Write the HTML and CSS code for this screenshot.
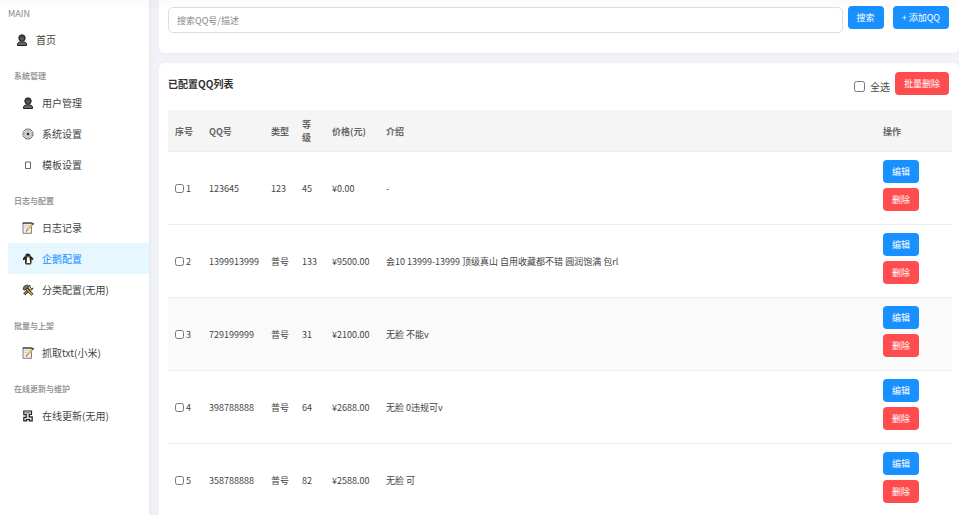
FILE: index.html
```
<!DOCTYPE html>
<html lang="zh-CN">
<head>
  <meta charset="UTF-8">
  <meta name="viewport" content="width=device-width, initial-scale=1.0">
  <title>企鹅配置</title>
  <link rel="stylesheet" href="styles.css">
</head>
<body>
  <!-- shared icons -->
  <svg class="sprite" aria-hidden="true">
    <symbol id="icon-user" viewBox="0 0 12 12">
      <path d="M1.500 11.500V9.500l1.500-1.300 1.500-.4h3l1.500.4 1.500 1.300v2z" fill="#666" stroke="#222"/>
      <circle cx="6" cy="4" r="3.200" fill="#444" stroke="#222"/>
      <path d="M4.500 4.500h3M5 6h2" stroke="#888" stroke-width=".6"/>
    </symbol>
    <symbol id="icon-note" viewBox="0 0 12 12">
      <path d="M1 1h8.500v10.300H1z" fill="#eee" stroke="#666" stroke-width=".8"/>
      <path d="M.6 1h9.300" stroke="#222"/>
      <path d="M2.500 3.500h5M2.500 5.500h3" stroke="#bbb" stroke-width=".6"/>
      <path d="M4.800 8.300l5.700-6" stroke="#e0b050" stroke-width="1.700"/>
      <path d="M10.300 2.500l1.200-1.300" stroke="#222" stroke-width="1.700"/>
      <path d="M4 9.300l1.200-1" stroke="#333"/>
    </symbol>
  </svg>

  <header class="topbar"></header>

  <div class="layout">
    <nav class="sidebar">
      <div class="sidebar-title">MAIN</div>
      <a class="nav-item" href="#"><svg class="icon"><use href="#icon-user"/></svg>首页</a>

      <div class="nav-group">
        <div class="group-title">系统管理</div>
        <a class="nav-item" href="#"><svg class="icon"><use href="#icon-user"/></svg>用户管理</a>
        <a class="nav-item" href="#">
          <svg class="icon" viewBox="0 0 12 12">
            <circle cx="6" cy="6" r="5" fill="none" stroke="#444" stroke-width="1" stroke-dasharray="2.400 .4"/>
            <circle cx="6" cy="6" r="3.800" fill="#ddd" stroke="#999" stroke-width=".6"/>
            <path d="M6 2.500v7M2.500 6h7M3.500 3.500l5 5M8.500 3.500l-5 5" stroke="#aaa" stroke-width=".5"/>
            <circle cx="6" cy="6" r="1.200" fill="#222"/>
          </svg>系统设置</a>
        <a class="nav-item" href="#">
          <svg class="icon" viewBox="0 0 12 12">
            <path d="M3.500 3h5v6.500h-5z" fill="none" stroke="#555" stroke-width=".9"/>
          </svg>模板设置</a>
      </div>

      <div class="nav-group">
        <div class="group-title">日志与配置</div>
        <a class="nav-item" href="#"><svg class="icon"><use href="#icon-note"/></svg>日志记录</a>
        <a class="nav-item active" href="#">
          <svg class="icon" viewBox="0 0 12 12">
            <path d="M5.500.5C4 .5 3.200 1.500 3.200 2.800L1 5.200v2l2-.7v3.700l1 1.200h4.500l1-1.200V6.500l1.700.7v-2L8.500 2.800C8.200 1.200 7.200.5 5.500.5z" fill="#222"/>
            <path d="M5 4.200h2.400l.8 5.800H4.600z" fill="#fff"/>
            <path d="M3.500 2.300l2 .6-2 .9zM3.800 10.600h1.800v.9H3.800zM7 10.600h1.800v.9H7z" fill="#c98f30"/>
            <path d="M5 3.900h3" stroke="#e0a030" stroke-width=".7"/>
          </svg>企鹅配置</a>
        <a class="nav-item" href="#">
          <svg class="icon" viewBox="0 0 12 12">
            <path d="M2.200 10.300l6.500-6.500" stroke="#222" stroke-width="2.600"/>
            <path d="M2.300 10.200l6.200-6.200" stroke="#ccc" stroke-width="1"/>
            <path d="M8 1.200a2.500 2.500 0 1 0 3 3L9.500 4.500 8 3z" fill="#ccc" stroke="#222" stroke-width=".8"/>
            <path d="M4 4.500l6.500 6.300" stroke="#222" stroke-width="2.800"/>
            <path d="M4.500 5l5.800 5.600" stroke="#e0a030" stroke-width="1.600"/>
            <path d="M1 5.200l1.200-3L5.500.9l1 1.600-3.800 3.700z" fill="#777" stroke="#222" stroke-width=".8"/>
          </svg>分类配置(无用)</a>
      </div>

      <div class="nav-group">
        <div class="group-title">批量与上架</div>
        <a class="nav-item" href="#"><svg class="icon"><use href="#icon-note"/></svg>抓取txt(小米)</a>
      </div>

      <div class="nav-group">
        <div class="group-title">在线更新与维护</div>
        <a class="nav-item" href="#">
          <svg class="icon" viewBox="0 0 12 12">
            <path d="M1.800 1h7.700v3.500H7.300v2.300h2.900v4H7.500V9.700h-3v1.100H1.800V7.300h2.400V4.700H1.800z" fill="#ddd" stroke="#222" stroke-width="1.200"/>
            <path d="M3.500 2.800h4.300" stroke="#555" stroke-width=".9"/>
          </svg>在线更新(无用)</a>
      </div>
    </nav>

    <main class="content">
      <section class="card">
        <form class="search-bar">
          <input type="text" class="search-input" placeholder="搜索QQ号/描述" aria-label="搜索QQ号/描述">
          <div class="search-actions">
            <button type="button" class="btn">搜索</button>
            <button type="button" class="btn">+ 添加QQ</button>
          </div>
        </form>
      </section>

      <section class="card list-card">
        <div class="list-header">
          <h2>已配置QQ列表</h2>
          <div class="batch">
            <label class="check-all"><input type="checkbox">全选</label>
            <button type="button" class="btn btn-danger">批量删除</button>
          </div>
        </div>

        <table>
          <thead>
            <tr>
              <th class="col-index">序号</th>
              <th class="col-qq">QQ号</th>
              <th class="col-type">类型</th>
              <th class="col-level">等级</th>
              <th class="col-price">价格(元)</th>
              <th>介绍</th>
              <th class="col-action">操作</th>
            </tr>
          </thead>
          <tbody>
            <tr>
              <td><label class="pick"><input type="checkbox">1</label></td>
              <td>123645</td>
              <td>123</td>
              <td>45</td>
              <td>¥0.00</td>
              <td>-</td>
              <td><div class="actions"><button class="btn">编辑</button><button class="btn btn-danger">删除</button></div></td>
            </tr>
            <tr>
              <td><label class="pick"><input type="checkbox">2</label></td>
              <td>1399913999</td>
              <td>普号</td>
              <td>133</td>
              <td>¥9500.00</td>
              <td>会10 13999-13999 顶级真山 自用收藏都不错 圆润饱满 包rl</td>
              <td><div class="actions"><button class="btn">编辑</button><button class="btn btn-danger">删除</button></div></td>
            </tr>
            <tr class="highlight">
              <td><label class="pick"><input type="checkbox">3</label></td>
              <td>729199999</td>
              <td>普号</td>
              <td>31</td>
              <td>¥2100.00</td>
              <td>无脸 不能v</td>
              <td><div class="actions"><button class="btn">编辑</button><button class="btn btn-danger">删除</button></div></td>
            </tr>
            <tr>
              <td><label class="pick"><input type="checkbox">4</label></td>
              <td>398788888</td>
              <td>普号</td>
              <td>64</td>
              <td>¥2688.00</td>
              <td>无脸 0违规可v</td>
              <td><div class="actions"><button class="btn">编辑</button><button class="btn btn-danger">删除</button></div></td>
            </tr>
            <tr>
              <td><label class="pick"><input type="checkbox">5</label></td>
              <td>358788888</td>
              <td>普号</td>
              <td>82</td>
              <td>¥2588.00</td>
              <td>无脸 可</td>
              <td><div class="actions"><button class="btn">编辑</button><button class="btn btn-danger">删除</button></div></td>
            </tr>
          </tbody>
        </table>
      </section>
    </main>
  </div>
</body>
</html>
```
FILE: styles.css
```
:root {
  --primary: #1890ff;
  --danger: #ff4d4f;
  --text: #444;
  --bg: #f1f3f9;
}

* {
  box-sizing: border-box;
}

body {
  margin: 0;
  font-family: "Noto Sans CJK SC", "Noto Sans", sans-serif;
  font-size: 9px;
  color: var(--text);
  background: var(--bg);
}

button, input {
  font-family: inherit;
}

.sprite {
  display: none;
}

/* only the shadow of the bar shows over the page */
.topbar {
  position: sticky;
  top: 0;
  height: 0;
  z-index: 10;
  box-shadow: 0 1px 10px 2px rgba(0, 0, 0, 0.05);
}

.layout {
  display: flex;
  gap: 10px;
  height: 100vh;
  overflow: hidden;
}

/* sidebar */
.sidebar {
  flex: 0 0 149px;
  padding: 4px 0 0 8px;
  background: #fff;
  box-shadow: 1px 0 6px rgba(0, 0, 0, 0.06);
}

.sidebar-title {
  font-size: 9px;
  line-height: 20px;
  color: #888;
}

.nav-item {
  display: flex;
  align-items: center;
  gap: 8px;
  height: 31px;
  padding-left: 8px;
  font-size: 10px;
  color: var(--text);
  text-decoration: none;
}

.nav-group .nav-item {
  padding-left: 14px;
}

.nav-item.active {
  background: #e6f7ff;
  color: var(--primary);
}

.icon {
  width: 12px;
  height: 12px;
}

.group-title {
  height: 32px;
  padding: 10px 0 0 6px;
  font-size: 8px;
  font-weight: bold;
  line-height: 22px;
  color: #999;
}

/* content */
.content {
  flex: 1;
  min-width: 0;
}

.card {
  padding: 6px 7px 19px 9px;
  margin-bottom: 10px;
  background: #fff;
  border-radius: 0 0 6px 6px;
  box-shadow: 0 1px 6px rgba(0, 0, 0, 0.03);
}

.list-card {
  padding-top: 9px;
  border-radius: 6px;
}

.btn {
  height: 23px;
  margin: 0 0 5px;
  padding: 0 9px;
  border: none;
  border-radius: 4px;
  background: var(--primary);
  color: #fff;
  font-size: 9px;
  line-height: 23px;
  white-space: nowrap;
  cursor: pointer;
}

.btn-danger {
  background: var(--danger);
}

.search-bar {
  display: flex;
  align-items: center;
  gap: 5px;
  padding-right: 3px;
}

.search-input {
  flex: 1;
  min-width: 0;
  height: 26px;
  padding: 0 8px;
  border: 1px solid #ddd;
  border-radius: 5px;
  font-size: 9px;
}

.search-input::placeholder {
  color: #888;
}

.search-actions {
  display: flex;
  gap: 9px;
}

.list-header {
  display: flex;
  justify-content: space-between;
  padding-right: 3px;
  margin-bottom: 10px;
}

.list-header h2 {
  margin: 0;
  font-size: 10px;
  line-height: 24px;
  color: #333;
}

.batch {
  display: flex;
  align-items: center;
  gap: 5px;
}

.check-all {
  display: flex;
  align-items: center;
  gap: 5px;
  font-size: 10px;
}

.check-all input {
  width: 11px;
  height: 11px;
  margin: 0;
}

/* table */
table {
  width: 100%;
  table-layout: fixed;
  border-collapse: separate;
  border-spacing: 0;
}

th, td {
  padding: 8px 4px 7px 7px;
  border-bottom: 1px solid #eee;
  line-height: 13px;
  text-align: left;
}

th {
  background: #f5f5f5;
  color: #666;
}

td {
  height: 73px;
  padding-bottom: 8px;
  white-space: nowrap;
}

.highlight td {
  background: #fafafa;
}

.col-index { width: 34px; }
.col-qq { width: 62px; }
.col-type { width: 31px; }
.col-price { width: 54px; }
.col-action { width: 76px; }

.col-level {
  width: 30px;
  padding-right: 8px;
}

.pick {
  display: flex;
  align-items: center;
  gap: 2px;
}

.pick input {
  width: 9px;
  height: 9px;
  margin: 0;
}

.actions {
  display: flex;
  flex-direction: column;
  align-items: flex-start;
}
```
